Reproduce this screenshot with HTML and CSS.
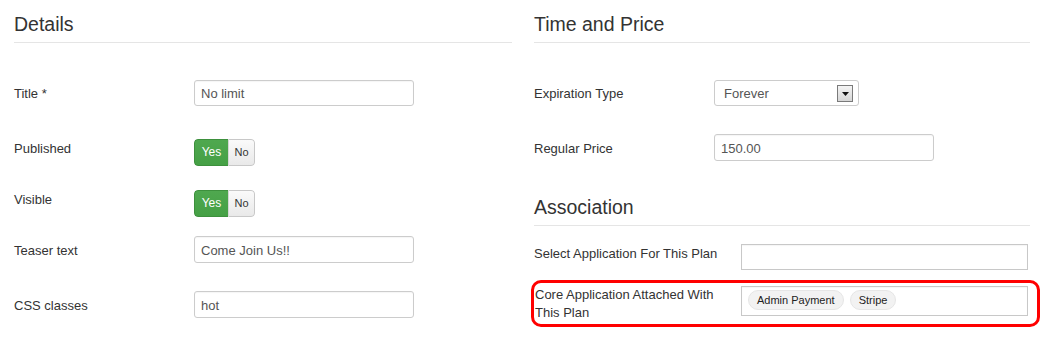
FILE: index.html
```html
<!DOCTYPE html>
<html>
<head>
<meta charset="utf-8">
<link rel="stylesheet" href="styles.css">
</head>
<body>
<div class="page">
  <section class="col">
    <h2 class="legend">Details</h2>
    <div class="row row-title">
      <label class="lbl lbl-mid">Title *</label>
      <div class="input w220 h26">No limit</div>
    </div>
    <div class="row row-pub">
      <label class="lbl">Published</label>
      <div class="toggle"><span class="yes">Yes</span><span class="no">No</span></div>
    </div>
    <div class="row row-vis">
      <label class="lbl">Visible</label>
      <div class="toggle"><span class="yes">Yes</span><span class="no">No</span></div>
    </div>
    <div class="row row-teaser">
      <label class="lbl lbl-mid27">Teaser text</label>
      <div class="input w220">Come Join Us!!</div>
    </div>
    <div class="row row-css">
      <label class="lbl lbl-mid27">CSS classes</label>
      <div class="input w220">hot</div>
    </div>
  </section>

  <section class="col">
    <h2 class="legend">Time and Price</h2>
    <div class="row row-title">
      <label class="lbl lbl-mid">Expiration Type</label>
      <div class="select">
        <span>Forever</span>
        <span class="drop"><svg width="7" height="4" viewBox="0 0 7 4"><path d="M0 0H7L3.5 4Z" fill="#111"/></svg></span>
      </div>
    </div>
    <div class="row row-price">
      <label class="lbl lbl-mid27">Regular Price</label>
      <div class="input w220">150.00</div>
    </div>

    <h2 class="legend legend-assoc">Association</h2>
    <div class="row row-app">
      <label class="lbl lbl-wide">Select Application For This Plan</label>
      <div class="input wide h26 plain"></div>
    </div>
    <div class="highlight">
      <label class="lbl lbl-wide">Core Application Attached With This Plan</label>
      <div class="input wide chips-box plain">
        <span class="chip">Admin Payment</span>
        <span class="chip">Stripe</span>
      </div>
    </div>
  </section>
</div>
</body>
</html>
```

FILE: styles.css
```css
html, body {
  margin: 0;
  padding: 0;
  background: #fff;
}

body {
  font-family: "Liberation Sans", Arial, sans-serif;
  font-size: 13px;
  color: #333;
}

.page {
  display: grid;
  grid-template-columns: 498px 496px;
  column-gap: 22px;
  padding-left: 14px;
}

.col {
  display: flex;
  flex-direction: column;
}

.legend {
  margin: 0;
  padding: 12px 0 6px;
  font-size: 19.5px;
  font-weight: normal;
  line-height: 24px;
  color: #333;
  border-bottom: 1px solid #e5e5e5;
}

.legend-assoc {
  margin-top: 22px;
}

.row {
  display: flex;
  align-items: flex-start;
}

.row-title { margin-top: 37px; }
.row-pub { margin-top: 33px; }
.row-vis { margin-top: 24px; }
.row-teaser { margin-top: 19px; }
.row-css { margin-top: 28px; }
.row-price { margin-top: 28px; }
.row-app { margin-top: 18px; }

.lbl {
  width: 180px;
  flex-shrink: 0;
  line-height: 18px;
  padding-top: 1px;
  margin-bottom: -1px;
  color: #333;
}

.lbl-mid { line-height: 26px; }
.lbl-mid27 { line-height: 27px; }

.lbl-wide {
  width: 195px;
  margin-right: 12px;
}

.input {
  box-sizing: border-box;
  height: 27px;
  border: 1px solid #ccc;
  border-radius: 3px;
  padding: 1px 6px 0;
  line-height: 25px;
  color: #555;
  background: #fff;
  box-shadow: inset 0 1px 1px rgba(0,0,0,0.04);
}

.w220 { width: 220px; }
.h26 { height: 26px; line-height: 24px; }

.wide {
  width: 287px;
}

.plain {
  border-radius: 0;
  border-color: #c8c8c8;
}

.toggle {
  display: flex;
  height: 27px;
  border-radius: 4px;
  overflow: hidden;
  font-size: 12px;
  line-height: 27px;
}

.toggle .yes {
  width: 34px;
  text-align: center;
  color: #fff;
  background: linear-gradient(#4fa84f, #45a045);
  border: 1px solid #3d903d;
  border-right: none;
  border-radius: 4px 0 0 4px;
  box-sizing: border-box;
  line-height: 25px;
}

.toggle .no {
  width: 27px;
  text-align: center;
  color: #333;
  font-size: 11px;
  background: linear-gradient(#fafafa, #e9e9e9);
  border: 1px solid #c8c8c8;
  border-left: 1px solid #d5d5d5;
  border-radius: 0 4px 4px 0;
  box-sizing: border-box;
  line-height: 25px;
}

.select {
  box-sizing: border-box;
  width: 145px;
  height: 26px;
  border: 1px solid #ccc;
  border-radius: 3px;
  padding: 1px 5px 0 9px;
  display: flex;
  align-items: center;
  justify-content: space-between;
  color: #555;
  background: #fff;
}

.drop {
  box-sizing: border-box;
  width: 16px;
  height: 17px;
  border: 1px solid #7a7a7a;
  background: linear-gradient(#f4f4f4, #d6d6d6);
  display: flex;
  align-items: center;
  justify-content: center;
}

.highlight {
  display: flex;
  align-items: flex-start;
  margin: 10px -10px 0 -3px;
  padding: 2px 9px 3px 0;
  border: 3px solid #f00;
  border-radius: 10px;
}

.highlight .lbl-wide {
  width: 192px;
  margin-left: 1px;
  margin-right: 14px;
}

.chips-box {
  margin-top: 1px;
  height: 30px;
  padding: 3px 6px;
  display: flex;
  gap: 6px;
  align-items: flex-start;
}

.chip {
  box-sizing: border-box;
  height: 20px;
  padding: 0 8px;
  border: 1px solid #e6e6e6;
  border-radius: 10px;
  background: #f2f2f2;
  color: #222;
  font-size: 11px;
  line-height: 18px;
}
```
